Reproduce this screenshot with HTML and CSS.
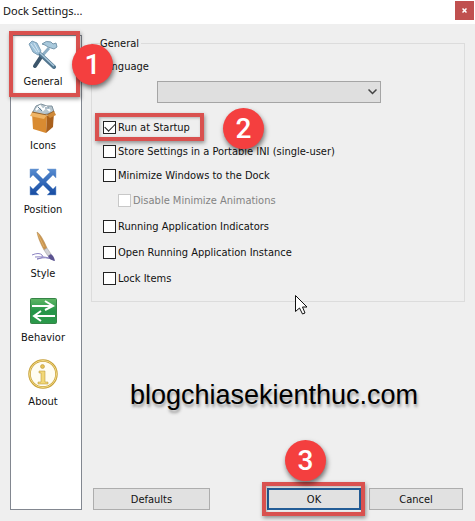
FILE: index.html
```html
<!DOCTYPE html>
<html lang="en">
<head>
    <meta charset="UTF-8">
    <meta name="viewport" content="width=device-width, initial-scale=1.0">
    <title>Dock Settings...</title>

    <link rel="stylesheet" href="styles.css">
</head>
<body>
    <header class="titlebar">
        <h1>Dock Settings...</h1>
        <button class="close" type="button" aria-label="Close">
            <svg width="5" height="5" viewBox="0 0 5 5"><path d="M0.5 0.5L4.5 4.5M4.5 0.5L0.5 4.5" stroke="#fff" stroke-width="1.5"/></svg>
        </button>
    </header>

    <main class="dialog">
        <nav class="sidebar">
            <a class="tab" href="#general">
                <svg width="30" height="30" viewBox="0 0 30 30">
                    <path d="M21 9L12 19" stroke="#8eafc5" stroke-width="3"/>
                    <path d="M13 18L7 27" stroke="#3c566b" stroke-width="4" stroke-linecap="round"/>
                    <path d="M11 14L26 28" stroke="#52768f" stroke-width="4" stroke-linecap="round"/>
                    <path d="M11 13L26 27" stroke="#a9c8dc" stroke-width="1.5"/>
                    <path d="M1 5L4 2L9 4L13 12L10 16L5 13Z" fill="#9fc2da" stroke="#7d9fb6"/>
                    <path d="M3 5L9 13M6 4L11 13" stroke="#d5e7f2"/>
                    <path d="M14 5Q18 1 23 3L25 5L28 4L29 8L26 10L23 9L20 8L17 6Z" fill="#a9c9dc" stroke="#7797ac"/>
                </svg>
                <span>General</span>
            </a>
            <a class="tab" href="#icons">
                <svg width="30" height="30" viewBox="0 0 30 30">
                    <path d="M5 9L8 3L13 1L19 3L24 3L26 9L15 12Z" fill="#b8c6ce" stroke="#7f919d"/>
                    <path d="M8 7L12 3L15 7L18 4L22 8" fill="none" stroke="#fff" stroke-width="2"/>
                    <path d="M10 4L14 8M17 5L21 5" stroke="#5f7f96"/>
                    <path d="M4 10L19 13L18 30L5 26Z" fill="#d98b31"/>
                    <path d="M19 13L26 9L25 24L18 30Z" fill="#a9601c"/>
                    <path d="M4 9L2 13L16 16L19 12Z" fill="#efb466"/>
                    <path d="M19 12L26 8L28 12L22 15Z" fill="#cf8938"/>
                    <path d="M4 9L19 12L26 8" fill="none" stroke="#9a652c"/>
                </svg>
                <span>Icons</span>
            </a>
            <a class="tab" href="#position">
                <svg width="30" height="30" viewBox="0 0 30 30">
                    <defs><linearGradient id="blue" x2="0" y2="1"><stop stop-color="#568bd0"/><stop offset="1" stop-color="#164ba2"/></linearGradient></defs>
                    <path d="M2 2H11L8 5L15 12L22 5L19 2H28V11L25 8L18 15L25 22L28 19V28H19L22 25L15 18L8 25L11 28H2V19L5 22L12 15L5 8L2 11Z" fill="url(#blue)" stroke="#7fa3d3" stroke-width="0.5"/>
                </svg>
                <span>Position</span>
            </a>
            <a class="tab" href="#style">
                <svg width="30" height="30" viewBox="0 0 30 30">
                    <path d="M4 24Q11 21 14 24T9 28Q17 25 26 29Q19 25 7 26" fill="none" stroke="#8d85c2"/>
                    <path d="M9 1Q13 3 19 17L16 19Q10 8 9 1Z" fill="#c99450" stroke="#b58a4e" stroke-width="0.5"/>
                    <path d="M10 3L16 16" stroke="#e0b068"/>
                    <path d="M16 19L19 17L23 23L20 25Z" fill="#d2d2d6" stroke="#96969a" stroke-width="0.5"/>
                    <path d="M20 25L23 23Q26 25 27 30Q21 29 20 25Z" fill="#5b5390"/>
                </svg>
                <span>Style</span>
            </a>
            <a class="tab" href="#behavior">
                <svg width="30" height="30" viewBox="0 0 30 30">
                    <defs><linearGradient id="green" x2="0" y2="1"><stop stop-color="#5fb665"/><stop offset="0.5" stop-color="#249548"/><stop offset="1" stop-color="#2b9a4b"/></linearGradient></defs>
                    <rect x="2.5" y="3.5" width="26" height="25" rx="1" fill="url(#green)" stroke="#368447"/>
                    <path d="M4 11H25M17 6L25 11L17 15M27 21H6M13 16L6 21L13 26" fill="none" stroke="#fff" stroke-width="2"/>
                </svg>
                <span>Behavior</span>
            </a>
            <a class="tab" href="#about">
                <svg width="30" height="30" viewBox="0 0 30 30">
                    <circle cx="15" cy="15" r="13.5" fill="#fffdf2" stroke="#c7a03a" stroke-width="2.5"/>
                    <circle cx="15" cy="15" r="13.5" fill="none" stroke="#f3dc86" stroke-width="1"/>
                    <circle cx="14.5" cy="7.5" r="2" fill="#e5c154" stroke="#b28c2e" stroke-width="0.5"/>
                    <path d="M11 12H17V23H20V25H10V23H13V14H11Z" fill="#f2d878" stroke="#b28c2e" stroke-width="0.5"/>
                </svg>
                <span>About</span>
            </a>
            <div class="outline outline-tab"></div>
            <div class="badge badge-tab">1</div>
        </nav>

        <form class="content">
            <fieldset class="group">
                <legend>General</legend>
                <label class="field-name" for="language">Language</label>
                <div class="select-wrap">
                    <select id="language" disabled></select>
                    <svg class="arrow" width="9" height="6" viewBox="0 0 9 6"><path d="M0.5 0.5L4.5 4.5L8.5 0.5" fill="none" stroke="#444" stroke-width="1.5"/></svg>
                </div>
                <div class="options">
                    <div class="option marked">
                        <label><input type="checkbox" checked>Run at Startup</label>
                        <div class="outline outline-option"></div>
                        <div class="badge badge-option">2</div>
                    </div>
                    <div class="option"><label><input type="checkbox">Store Settings in a Portable INI (single-user)</label></div>
                    <div class="option"><label><input type="checkbox">Minimize Windows to the Dock</label></div>
                    <div class="option spaced nested"><label><input type="checkbox" disabled>Disable Minimize Animations</label></div>
                    <div class="option spaced"><label><input type="checkbox">Running Application Indicators</label></div>
                    <div class="option spaced"><label><input type="checkbox">Open Running Application Instance</label></div>
                    <div class="option spaced"><label><input type="checkbox">Lock Items</label></div>
                </div>
                <svg class="cursor" width="13" height="20" viewBox="0 0 13 20"><path d="M0.5 0.5V16.5L4.5 13L7.5 19L10 18L7.5 12H12Z" fill="#fff" stroke="#111"/></svg>
            </fieldset>

            <p class="site">blogchiasekienthuc.com</p>

            <div class="buttons">
                <button class="btn btn-wide" type="button">Defaults</button>
                <div class="ok-wrap">
                    <button class="btn btn-default" type="button">OK</button>
                    <div class="outline outline-ok"></div>
                    <div class="badge badge-ok">3</div>
                </div>
                <button class="btn" type="button">Cancel</button>
            </div>
        </form>
    </main>
</body>
</html>
```
FILE: styles.css
```css
* {
    box-sizing: border-box;
}

body {
    margin: 0;
    min-height: 100vh;
    display: flex;
    flex-direction: column;
    background-color: #efefef;
    color: #111;
    font-family: "DejaVu Sans Condensed", "Noto Sans", sans-serif;
    font-size: 11px;
    line-height: 17px;
}

button, select, input {
    font: inherit;
    color: inherit;
    margin: 0;
}

.titlebar {
    display: flex;
    justify-content: space-between;
    align-items: flex-start;
    height: 24px;
    padding: 1px 1px 0 3px;
    background-color: #fff;
}

.titlebar h1 {
    margin: 0;
    font-family: "Noto Sans", sans-serif;
    font-size: 11px;
    font-weight: normal;
    line-height: 20px;
}

.close {
    display: flex;
    align-items: center;
    justify-content: center;
    width: 19px;
    height: 19px;
    padding: 0;
    border: 0;
    background-color: #c0504f;
}

.dialog {
    flex: 1;
    display: flex;
    gap: 9px;
    padding: 11px 10px;
}

.sidebar {
    position: relative;
    width: 72px;
    padding: 3px 6px 0 0;
    border: 1px solid #828790;
    background-color: #fff;
}

.tab {
    display: flex;
    flex-direction: column;
    align-items: center;
    height: 64px;
    gap: 4px;
    color: inherit;
    text-decoration: none;
}

.content {
    flex: 1;
    display: flex;
    flex-direction: column;
}

.group {
    position: relative;
    margin: 0;
    padding: 6px 8px 10px;
    border: 1px solid #dcdcdc;
}

.group legend {
    padding: 0 2px 0 0;
}

.field-name {
    display: block;
}

.select-wrap {
    position: relative;
    margin: 6px 75px 12px 57px;
}

.select-wrap select {
    display: block;
    width: 100%;
    height: 22px;
    appearance: none;
    border: 1px solid #a5a5a5;
    border-radius: 0;
    background-color: #dfdfdf;
    opacity: 1;
}

.arrow {
    position: absolute;
    top: 8px;
    right: 4px;
}

.options {
    padding-left: 3px;
}

.option {
    display: flex;
    align-items: center;
    height: 24px;
}

.option label {
    display: flex;
    align-items: center;
    gap: 2px;
}

.option input {
    width: 13px;
    height: 13px;
    appearance: none;
    border: 1px solid #222;
    background-color: #fff;
}

.option input:checked {
    display: grid;
    place-items: center;
}

.option input:checked::before {
    content: "";
    width: 9px;
    height: 5px;
    margin-bottom: 3px;
    border: solid #222;
    border-width: 0 0 1px 1px;
    transform: rotate(-45deg);
}

.spaced {
    height: 26px;
}

.nested {
    padding-left: 15px;
    color: #838383;
}

.nested input {
    border-color: #c8c8c8;
}

.marked,
.ok-wrap {
    position: relative;
}

.cursor {
    position: absolute;
    top: 243px;
    left: 203px;
}

.site {
    margin: 76px 0 0;
    padding-right: 8px;
    color: #000;
    font-family: "Liberation Sans", Arial, sans-serif;
    font-size: 27px;
    line-height: 34px;
    text-align: center;
    text-shadow: 1px 3px 3px #999;
}

.buttons {
    display: flex;
    gap: 8px;
    margin-top: auto;
    padding: 0 2px;
}

.btn {
    width: 94px;
    height: 22px;
    padding: 0;
    border: 1px solid #adadad;
    background-color: #e1e1e1;
}

.btn-wide {
    width: 117px;
    margin-right: auto;
}

.btn-default {
    display: block;
    border: 2px solid #235c96;
}

/* numbered callouts */
.outline {
    position: absolute;
    border: 4px solid #d9514f;
    box-shadow: 1px 2px 4px #0006, inset 1px 1px 3px #0004;
    pointer-events: none;
}

.outline-tab {
    top: -5px;
    left: -2px;
    width: 71px;
    height: 66px;
}

.outline-option {
    top: -2px;
    left: -8px;
    width: 109px;
    height: 28px;
}

.outline-ok {
    top: -6px;
    left: -5px;
    width: 103px;
    height: 34px;
}

.badge {
    position: absolute;
    z-index: 1;
    width: 41px;
    height: 41px;
    border-radius: 50%;
    background-color: #f43f3f;
    box-shadow: 1px 3px 5px #0008;
    color: #fff;
    font-family: Roboto, "Liberation Sans", sans-serif;
    font-size: 28px;
    font-weight: 500;
    line-height: 41px;
    text-align: center;
}

.badge-tab {
    top: 8px;
    left: 61px;
}

.badge-option {
    top: -7px;
    left: 120px;
}

.badge-ok {
    top: -48px;
    left: 18px;
}
```
